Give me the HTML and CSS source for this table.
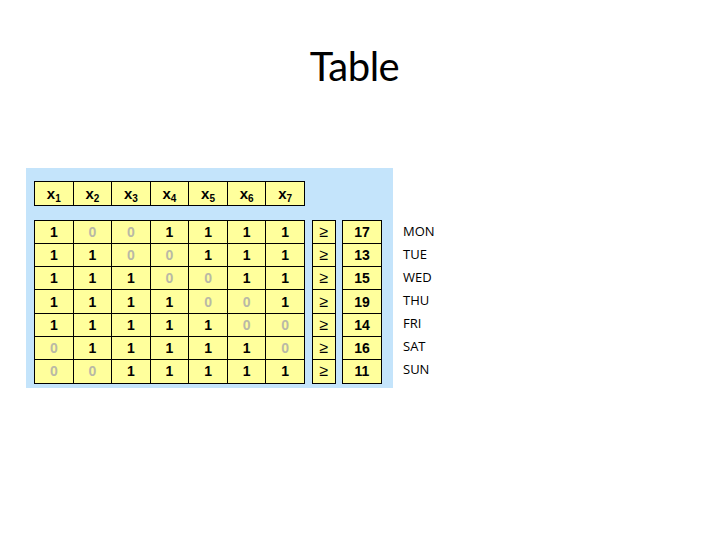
FILE: index.html
```html
<!DOCTYPE html>
<html>
<head>
<meta charset="utf-8">
<link rel="stylesheet" href="styles.css">
</head>
<body>
<h1 class="title">Table</h1>
<div class="stage">
  <div class="panel">
    <table class="grid vars">
      <tr><td>x<sub>1</sub></td><td>x<sub>2</sub></td><td>x<sub>3</sub></td><td>x<sub>4</sub></td><td>x<sub>5</sub></td><td>x<sub>6</sub></td><td>x<sub>7</sub></td></tr>
    </table>
    <div class="body">
      <table class="grid data">
        <tr><td>1</td><td class="z">0</td><td class="z">0</td><td>1</td><td>1</td><td>1</td><td>1</td></tr>
        <tr><td>1</td><td>1</td><td class="z">0</td><td class="z">0</td><td>1</td><td>1</td><td>1</td></tr>
        <tr><td>1</td><td>1</td><td>1</td><td class="z">0</td><td class="z">0</td><td>1</td><td>1</td></tr>
        <tr><td>1</td><td>1</td><td>1</td><td>1</td><td class="z">0</td><td class="z">0</td><td>1</td></tr>
        <tr><td>1</td><td>1</td><td>1</td><td>1</td><td>1</td><td class="z">0</td><td class="z">0</td></tr>
        <tr><td class="z">0</td><td>1</td><td>1</td><td>1</td><td>1</td><td>1</td><td class="z">0</td></tr>
        <tr><td class="z">0</td><td class="z">0</td><td>1</td><td>1</td><td>1</td><td>1</td><td>1</td></tr>
      </table>
      <table class="grid ge">
        <tr><td>&ge;</td></tr><tr><td>&ge;</td></tr><tr><td>&ge;</td></tr><tr><td>&ge;</td></tr><tr><td>&ge;</td></tr><tr><td>&ge;</td></tr><tr><td>&ge;</td></tr>
      </table>
      <table class="grid rhs">
        <tr><td>17</td></tr><tr><td>13</td></tr><tr><td>15</td></tr><tr><td>19</td></tr><tr><td>14</td></tr><tr><td>16</td></tr><tr><td>11</td></tr>
      </table>
    </div>
  </div>
  <ul class="days">
    <li>MON</li><li>TUE</li><li>WED</li><li>THU</li><li>FRI</li><li>SAT</li><li>SUN</li>
  </ul>
</div>
</body>
</html>
```
FILE: styles.css
```css
html, body {
  margin: 0;
  padding: 0;
  background: #ffffff;
  width: 720px;
  height: 540px;
  overflow: hidden;
}
.title {
  margin: 0;
  padding: 42px 11px 0 0;
  height: 64px;
  text-align: center;
  font-family: "Lato", "Open Sans", sans-serif;
  font-weight: normal;
  font-size: 40px;
  line-height: 48px;
  letter-spacing: -0.5px;
  color: #000;
}
.stage {
  display: flex;
  align-items: flex-start;
  margin-top: 62px;
  margin-left: 26px;
}
.panel {
  background: #c4e4fb;
  width: 359px;
  height: 207px;
  padding: 13px 0 0 8px;
}
.grid {
  border-collapse: collapse;
  table-layout: fixed;
  background: #ffff9c;
  font-family: "Liberation Sans", Arial, sans-serif;
  font-weight: bold;
  font-size: 14px;
  color: #000;
}
.grid td {
  border: 1.5px solid #000;
  text-align: center;
  padding: 0;
  height: 22.3px;
}
.vars {
  width: 271px;
}
.vars td {
  font-size: 15px;
  height: 22.5px;
}
.vars sub {
  font-size: 10px;
  vertical-align: -3px;
  line-height: 0;
}
.body {
  display: flex;
  align-items: flex-start;
  margin-top: 14px;
}
.data {
  width: 271px;
}
.z {
  color: #b9b9a6;
}
.ge {
  width: 24px;
  margin-left: 7px;
  font-weight: normal;
  font-size: 16px;
}
.rhs {
  width: 40px;
  margin-left: 6px;
}
.days {
  list-style: none;
  margin: 52px 0 0 10px;
  padding: 0;
  font-family: "Open Sans", sans-serif;
  font-size: 13px;
  line-height: 23px;
  color: #000;
}
```
